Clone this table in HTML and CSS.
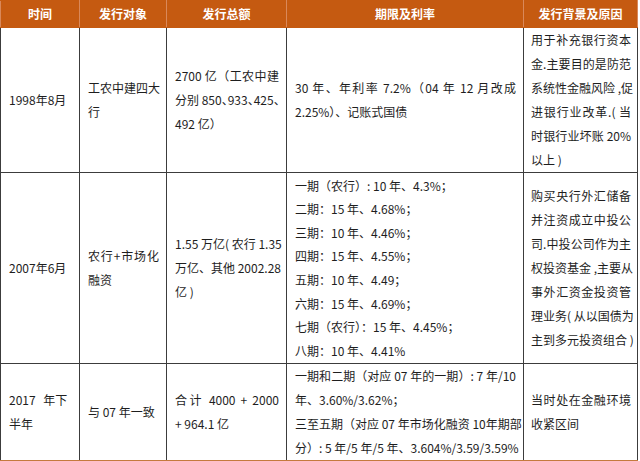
FILE: index.html
```html
<!DOCTYPE html>
<html lang="zh-CN">
<head>
<meta charset="utf-8">
<link rel="stylesheet" href="styles.css">
</head>
<body>
<table class="tbl">
  <colgroup>
    <col class="c1"><col class="c2"><col class="c3"><col class="c4"><col class="c5">
  </colgroup>
  <thead>
    <tr class="hd">
      <th>时间</th><th>发行对象</th><th>发行总额</th><th>期限及利率</th><th>发行背景及原因</th>
    </tr>
  </thead>
  <tbody>
    <tr class="r1">
      <td><div class="l">1998年8月</div></td>
      <td><div class="j">工农中建四大</div><div class="l">行</div></td>
      <td><div class="j">2700 亿（工农中建</div><div class="j hw">分别 850、933、425、</div><div class="l">492 亿）</div></td>
      <td><div class="j">30 年、年利率 7.2%（04 年 12 月改成</div><div class="l">2.25%）、记账式国债</div></td>
      <td class="narrow"><div class="j">用于补充银行资本</div><div class="j">金.主要目的是防范</div><div class="j">系统性金融风险 ,促</div><div class="j">进银行业改革.( 当</div><div class="j">时银行业坏账 20%</div><div class="l">以上 )</div></td>
    </tr>
    <tr class="r2">
      <td><div class="l">2007年6月</div></td>
      <td><div class="j">农行+市场化</div><div class="l">融资</div></td>
      <td><div class="j">1.55 万亿( 农行 1.35</div><div class="j">万亿、其他 2002.28</div><div class="l">亿 )</div></td>
      <td class="list">
        <div class="l">一期（农行）: 10 年、4.3%；</div>
        <div class="l">二期：15 年、4.68%；</div>
        <div class="l">三期：10 年、4.46%；</div>
        <div class="l">四期：15 年、4.55%；</div>
        <div class="l">五期：10 年、4.49；</div>
        <div class="l">六期：15 年、4.69%；</div>
        <div class="l">七期（农行）：15 年、4.45%；</div>
        <div class="l">八期：10 年、4.41%</div>
      </td>
      <td class="narrow"><div class="j">购买央行外汇储备</div><div class="j">并注资成立中投公</div><div class="j">司.中投公司作为主</div><div class="j">权投资基金 ,主要从</div><div class="j">事外汇资金投资管</div><div class="j">理业务( 从以国债为</div><div class="j">主到多元投资组合 )</div></td>
    </tr>
    <tr class="r3">
      <td><div class="l ws">2017 年下</div><div class="l">半年</div></td>
      <td><div class="l">与 07 年一致</div></td>
      <td><div class="j">合计 4000 + 2000</div><div class="l">+ 964.1 亿</div></td>
      <td><div class="j">一期和二期（对应 07 年的一期）: 7 年/10</div><div class="l">年、3.60%/3.62%；</div><div class="j">三至五期（对应 07 年市场化融资 10年期部</div><div class="j">分）: 5 年/5 年/5 年、3.604%/3.59/3.59%</div></td>
      <td class="narrow"><div class="j">当时处在金融环境</div><div class="l">收紧区间</div></td>
    </tr>
  </tbody>
</table>
</body>
</html>
```

FILE: styles.css
```css
html, body {
  margin: 0;
  padding: 0;
  background: #ffffff;
}

body {
  font-family: "Noto Sans CJK SC", "Noto Sans", sans-serif;
  font-size: 12px;
  color: #1e1e1e;
}

.tbl {
  border-collapse: collapse;
  table-layout: fixed;
  width: 637px;
}

.c1 { width: 79px; }
.c2 { width: 87px; }
.c3 { width: 120px; }
.c4 { width: 237px; }
.c5 { width: 114px; }

.hd th {
  background: #c55a11;
  color: #ffffff;
  font-weight: 700;
  font-size: 12px;
  height: 26px;
  padding: 0;
  text-align: center;
  vertical-align: middle;
  border: 1px solid #c55a11;
  border-left-color: #d9885a;
  border-right-color: #d9885a;
  line-height: 26px;
}

td {
  border: 1px solid #3c3c3c;
  padding: 0 7px 0 8px;
  vertical-align: middle;
  line-height: 24px;
}

.r1 td { height: 144px; }
.r2 td { height: 190px; }
.r3 td { height: 94px; border-bottom: 2px solid #c57a3e; }

.list { line-height: 23.6px; }

.narrow { padding: 0 6px 0 7px; }

.j {
  white-space: nowrap;
  text-align: justify;
  text-align-last: justify;
}

.l {
  white-space: nowrap;
  text-align: left;
}

.hw { font-feature-settings: "halt" 1; }

.ws { word-spacing: 5px; }
```
